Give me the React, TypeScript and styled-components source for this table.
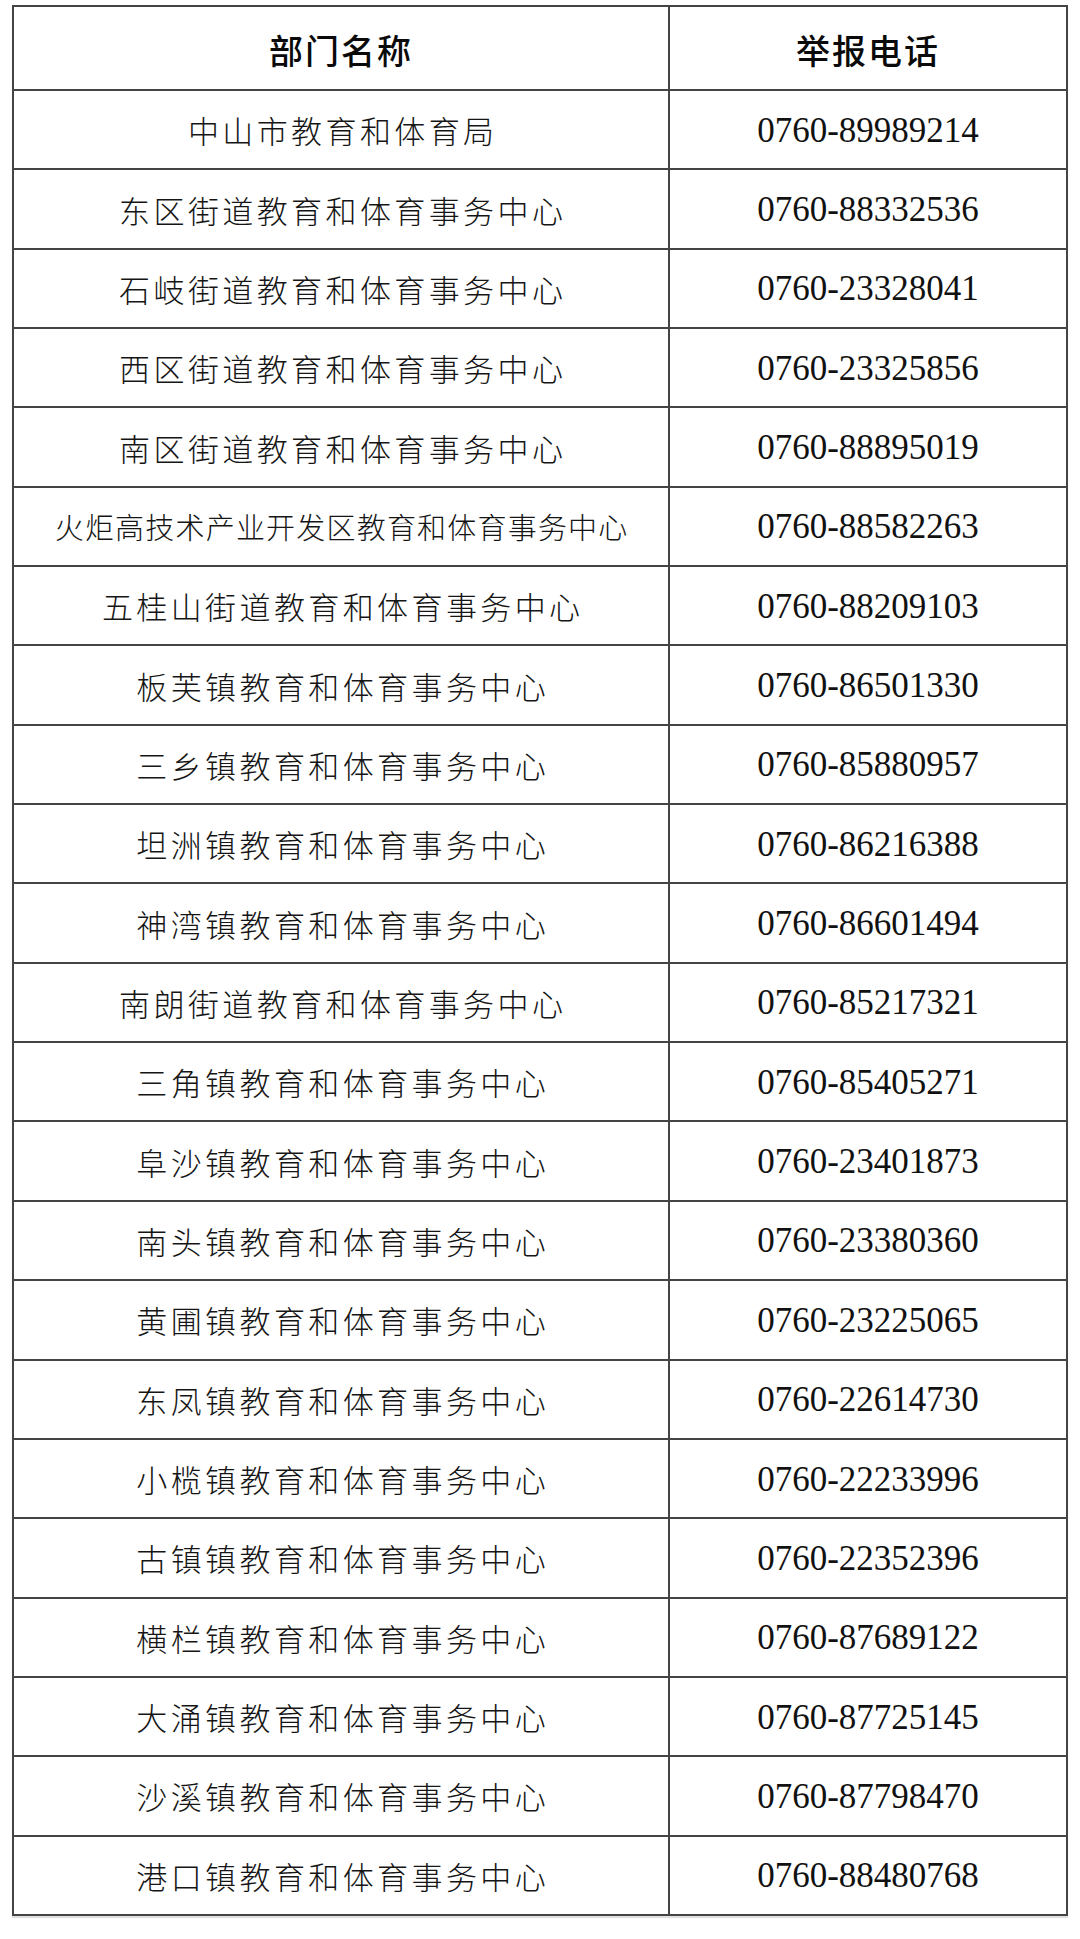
import React from 'react'
import styled, { createGlobalStyle } from 'styled-components'

const GlobalStyle = createGlobalStyle`
  html, body {
    margin: 0;
    padding: 0;
    background: #ffffff;
  }
  body {
    font-family: "Noto Sans CJK SC", "Noto Sans", sans-serif;
    color: #111;
  }
`

const Page = styled.div`
  width: 1080px;
  height: 1939px;
  padding: 5px 0 0 12px;
  box-sizing: border-box;
  background: #fff;
`

const Table = styled.div`
  display: grid;
  grid-template-columns: 656px 398px;
  grid-template-rows: 84px repeat(23, 79.35px);
  border-top: 2px solid #444;
  border-left: 2px solid #444;
  width: fit-content;
  box-shadow: 0 2px 1px rgba(0, 0, 0, 0.12);
`

const Cell = styled.div`
  display: flex;
  align-items: center;
  justify-content: center;
  box-sizing: border-box;
  border-right: 2px solid #444;
  border-bottom: 2px solid #444;
  white-space: nowrap;
`

const HeaderCell = styled(Cell)`
  font-family: "Noto Sans CJK SC", sans-serif;
  font-weight: 500;
  font-size: 34px;
  letter-spacing: 2px;
  color: #0a0a0a;
  padding-top: 2px;
`

const NameCell = styled(Cell)<{ $tight?: boolean }>`
  font-family: "Noto Sans CJK SC", sans-serif;
  font-weight: 300;
  font-size: ${({ $tight }) => ($tight ? '29px' : '31px')};
  letter-spacing: ${({ $tight }) => ($tight ? '1.2px' : '3.4px')};
  text-indent: ${({ $tight }) => ($tight ? '1.2px' : '3.4px')};
  color: #151515;
`

const PhoneCell = styled(Cell)`
  font-family: "Liberation Serif", "Times New Roman", serif;
  font-size: 35px;
  color: #111;
  padding-top: 2px;
`

const rows: [string, string][] = [
  ['中山市教育和体育局', '0760-89989214'],
  ['东区街道教育和体育事务中心', '0760-88332536'],
  ['石岐街道教育和体育事务中心', '0760-23328041'],
  ['西区街道教育和体育事务中心', '0760-23325856'],
  ['南区街道教育和体育事务中心', '0760-88895019'],
  ['火炬高技术产业开发区教育和体育事务中心', '0760-88582263'],
  ['五桂山街道教育和体育事务中心', '0760-88209103'],
  ['板芙镇教育和体育事务中心', '0760-86501330'],
  ['三乡镇教育和体育事务中心', '0760-85880957'],
  ['坦洲镇教育和体育事务中心', '0760-86216388'],
  ['神湾镇教育和体育事务中心', '0760-86601494'],
  ['南朗街道教育和体育事务中心', '0760-85217321'],
  ['三角镇教育和体育事务中心', '0760-85405271'],
  ['阜沙镇教育和体育事务中心', '0760-23401873'],
  ['南头镇教育和体育事务中心', '0760-23380360'],
  ['黄圃镇教育和体育事务中心', '0760-23225065'],
  ['东凤镇教育和体育事务中心', '0760-22614730'],
  ['小榄镇教育和体育事务中心', '0760-22233996'],
  ['古镇镇教育和体育事务中心', '0760-22352396'],
  ['横栏镇教育和体育事务中心', '0760-87689122'],
  ['大涌镇教育和体育事务中心', '0760-87725145'],
  ['沙溪镇教育和体育事务中心', '0760-87798470'],
  ['港口镇教育和体育事务中心', '0760-88480768'],
]

const App = () => {
  return (
    <>
      <GlobalStyle />
      <Page>
        <Table>
          <HeaderCell>部门名称</HeaderCell>
          <HeaderCell>举报电话</HeaderCell>
          {rows.map(([name, phone]) => (
            <React.Fragment key={phone}>
              <NameCell $tight={name.length > 16}>{name}</NameCell>
              <PhoneCell>{phone}</PhoneCell>
            </React.Fragment>
          ))}
        </Table>
      </Page>
    </>
  )
}

export default App
